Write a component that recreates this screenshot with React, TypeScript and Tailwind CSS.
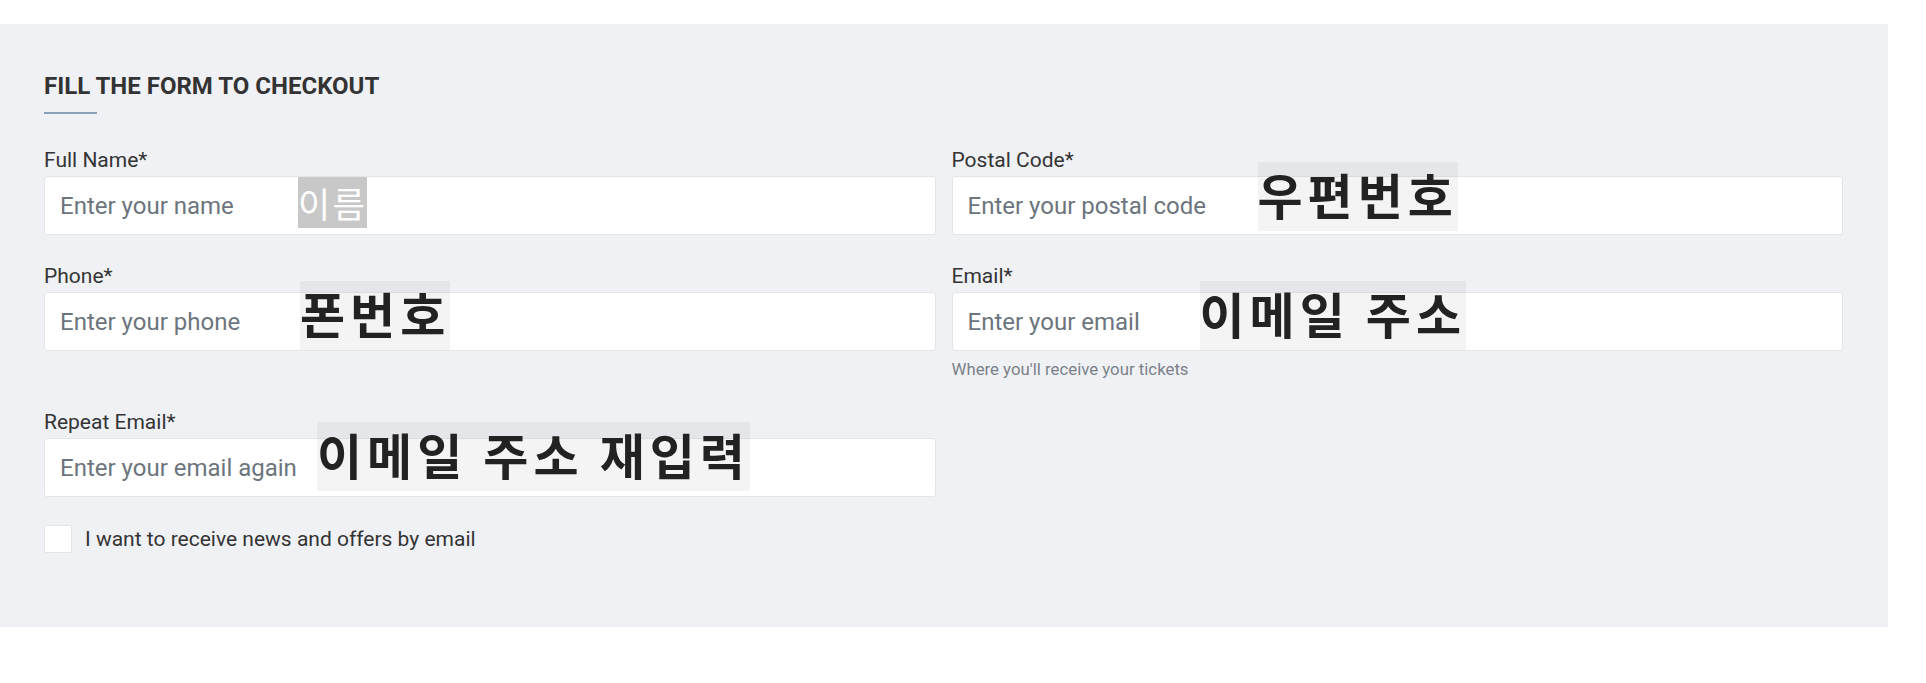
import React from "react";

const Overlay = ({
  text,
  className,
}: {
  text: string;
  className: string;
}) => (
  <span
    className={`absolute whitespace-nowrap font-['Noto_Sans_CJK_KR','Noto_Sans',sans-serif] ${className}`}
  >
    {text}
  </span>
);

const Field = ({
  label,
  placeholder,
  helper,
  children,
}: {
  label: string;
  placeholder: string;
  helper?: string;
  children?: React.ReactNode;
}) => (
  <div className="flex flex-col">
    <label className="mb-1 text-[21px] leading-[24px] text-[#343434]">{label}</label>
    <div className="relative">
      <input
        type="text"
        placeholder={placeholder}
        className="w-full h-[59px] bg-white border border-[#e4e5e8] rounded-[3px] px-[15px] text-[24px] text-[#333] placeholder:text-[#6c757d] outline-none"
      />
      {children}
    </div>
    {helper && (
      <p className="mt-2 mb-[2px] text-[16.8px] leading-[20px] text-[#7b8189]">{helper}</p>
    )}
  </div>
);

const bold =
  "h-[69px] leading-[64px] bg-black/[0.045] text-[#222] text-[49px] font-bold tracking-[5px]";

export default function App() {
  return (
    <div className="min-h-[683px] bg-white pt-6 font-['Roboto',sans-serif]">
      <div className="w-[1888px] bg-[#f0f1f5] pl-[44px] pr-[45px] pt-12 pb-[74px]">
        <h2 className="text-[24px] leading-[28px] font-bold text-[#333]">
          FILL THE FORM TO CHECKOUT
        </h2>
        <div className="mt-3 h-[2px] w-[53px] bg-[#8aa0b8]" />

        <div className="mt-[34px] grid grid-cols-2 gap-x-4 gap-y-[29px] items-start">
          <Field label="Full Name*" placeholder="Enter your name">
            <Overlay
              text="이름"
              className="left-[254px] top-[1px] h-[51px] leading-[51px] bg-[#c8c8c8] text-white text-[35px] font-normal tracking-[2.5px]"
            />
          </Field>
          <Field label="Postal Code*" placeholder="Enter your postal code">
            <Overlay text="우편번호" className={`left-[306px] top-[-14px] ${bold}`} />
          </Field>
          <Field label="Phone*" placeholder="Enter your phone">
            <Overlay text="폰번호" className={`left-[256px] top-[-11px] ${bold}`} />
          </Field>
          <Field
            label="Email*"
            placeholder="Enter your email"
            helper="Where you'll receive your tickets"
          >
            <Overlay text="이메일 주소" className={`left-[248px] top-[-11px] ${bold}`} />
          </Field>
          <Field label="Repeat Email*" placeholder="Enter your email again">
            <Overlay text="이메일 주소 재입력" className={`left-[273px] top-[-16px] ${bold}`} />
          </Field>
        </div>

        <label className="mt-[28px] flex items-center gap-[13px] cursor-pointer select-none">
          <span className="w-[28px] h-[28px] bg-white border border-[#e4e5e8] rounded-[2px]" />
          <span className="text-[21px] leading-[24px] text-[#343434]">
            I want to receive news and offers by email
          </span>
        </label>
      </div>
    </div>
  );
}
